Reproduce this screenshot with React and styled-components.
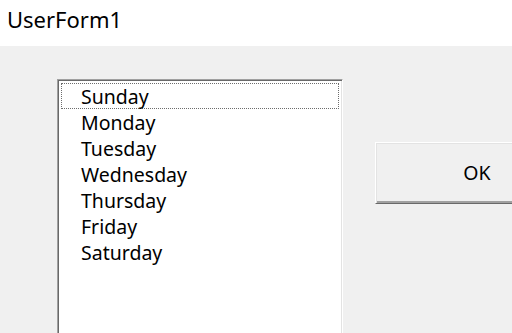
import React from "react";
import styled, { createGlobalStyle } from "styled-components";

const GlobalStyle = createGlobalStyle`
  html, body {
    margin: 0;
    padding: 0;
    background: #f0f0f0;
    overflow: hidden;
  }
  body {
    font-family: "Noto Sans", "Open Sans", sans-serif;
    color: #000;
  }
`;

const days = [
  "Sunday",
  "Monday",
  "Tuesday",
  "Wednesday",
  "Thursday",
  "Friday",
  "Saturday",
];

const Window = styled.div`
  width: 512px;
  height: 333px;
  display: flex;
  flex-direction: column;
  overflow: hidden;
`;

const TitleBar = styled.div`
  height: 46px;
  flex: none;
  background: #ffffff;
  display: flex;
  align-items: center;
  padding-left: 7px;
  padding-bottom: 8px;
  box-sizing: border-box;
  font-size: 22px;
`;

const Body = styled.div`
  flex: 1;
  display: flex;
  align-items: flex-start;
  gap: 32px;
  padding: 33px 0 0 57px;
`;

const ListBox = styled.ul`
  flex: none;
  width: 286px;
  height: 300px;
  box-sizing: border-box;
  margin: 0;
  padding: 3px 3px;
  list-style: none;
  background: #ffffff;
  border: 1px solid;
  border-color: #a0a0a0 #ffffff #ffffff #a0a0a0;
  box-shadow: inset 1px 1px 0 #696969, inset -1px -1px 0 #e3e3e3;
`;

const Item = styled.li`
  height: 26px;
  line-height: 25px;
  box-sizing: border-box;
  padding-left: 19px;
  font-size: 19.5px;
  border: 1px dotted ${({ $focused }) => ($focused ? "#6d6d6d" : "transparent")};
`;

const Button = styled.button`
  flex: none;
  margin-top: 63px;
  width: 204px;
  height: 62px;
  box-sizing: border-box;
  background: #f0f0f0;
  border: 1px solid;
  border-color: #ffffff #696969 #696969 #ffffff;
  box-shadow: inset 1px 1px 0 #e3e3e3, inset -1px -2px 0 #a0a0a0;
  font-family: inherit;
  font-size: 19.5px;
  color: #000;
  padding: 0 0 2px;
`;

const App = () => {
  return (
    <>
      <GlobalStyle />
      <Window>
        <TitleBar>UserForm1</TitleBar>
        <Body>
          <ListBox>
            {days.map((day, i) => (
              <Item key={day} $focused={i === 0}>
                {day}
              </Item>
            ))}
          </ListBox>
          <Button>OK</Button>
        </Body>
      </Window>
    </>
  );
};

export default App;
